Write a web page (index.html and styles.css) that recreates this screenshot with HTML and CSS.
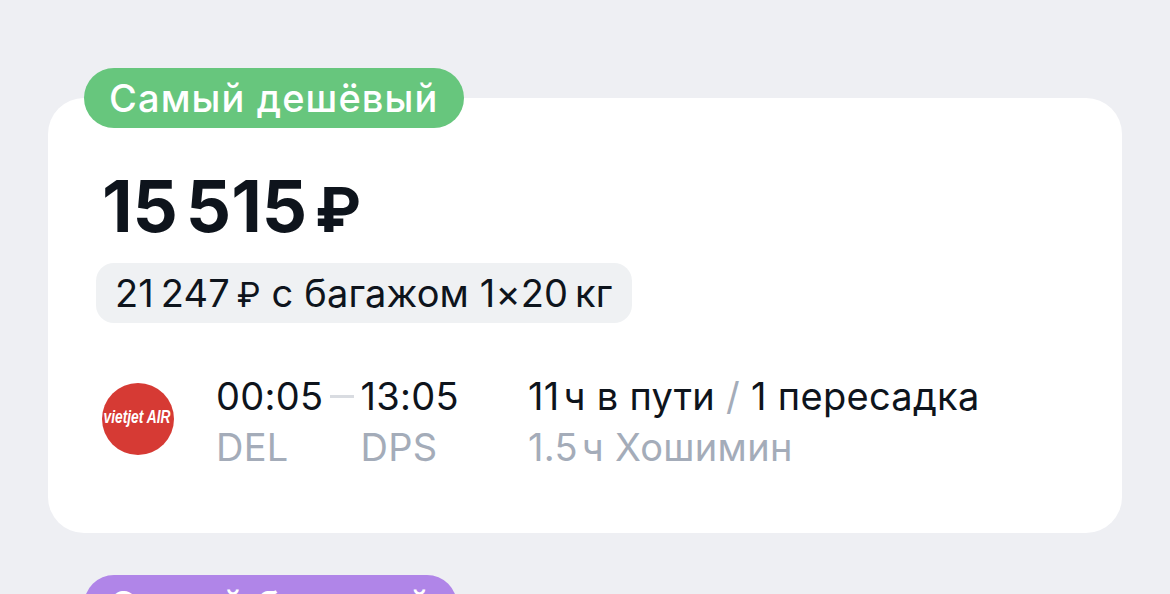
FILE: index.html
```html
<!DOCTYPE html>
<html lang="ru">
<head>
    <meta charset="UTF-8">
    <meta name="viewport" content="width=device-width, initial-scale=1.0">
    <title>Билеты</title>
    <link rel="stylesheet" href="styles.css">
</head>
<body>
    <div class="offers">
        <div class="offer">
            <div class="offer-badge badge-green">Самый дешёвый</div>
            <div class="price">15 515 <span class="rub">₽</span></div>
            <div class="baggage"><span class="tight">21 247 <span class="rub">₽</span></span> с багажом 1×<span class="tight">20 кг</span></div>
            <div class="flight">
                <svg class="airline-logo" viewBox="0 0 72 72">
                    <circle cx="36" cy="36" r="36" fill="#d63a34"/>
                    <text x="1.5" y="40" class="logo-text" textLength="67" lengthAdjust="spacingAndGlyphs">vietjet AIR</text>
                </svg>
                <div class="times">
                    <div class="time-col">
                        <div class="main-line">00:05</div>
                        <div class="sub-line">DEL</div>
                    </div>
                    <div class="time-dash"></div>
                    <div class="time-col">
                        <div class="main-line">13:05</div>
                        <div class="sub-line">DPS</div>
                    </div>
                </div>
                <div class="route">
                    <div class="main-line"><span class="tighter">11 ч</span> в пути <span class="slash">/</span> 1 пересадка</div>
                    <div class="sub-line"><span class="tighter">1.5 ч</span> Хошимин</div>
                </div>
            </div>
        </div>
        <div class="offer">
            <div class="offer-badge badge-purple">Самый быстрый</div>
        </div>
    </div>
</body>
</html>
```

FILE: styles.css
```css
* {
    margin: 0;
    padding: 0;
    box-sizing: border-box;
}

html, body {
    height: 100%;
    overflow: hidden;
}

body {
    font-family: 'Inter', 'Liberation Sans', sans-serif;
    background: #eeeff3;
    color: #0e141c;
}

.offers {
    padding: 98px 48px 0;
    display: flex;
    flex-direction: column;
    gap: 72px;
}

.offer {
    background: white;
    border-radius: 36px;
    padding: 0 36px 0 54px;
    height: 435px;
}

.offer-badge {
    width: fit-content;
    height: 60px;
    margin: -30px 0 0 -18px;
    padding: 0 25px;
    border-radius: 30px;
    color: white;
    font-size: 38px;
    font-weight: 500;
    letter-spacing: 1.1px;
    line-height: 60px;
    white-space: nowrap;
}

.badge-green {
    background: #67c67d;
}

.badge-purple {
    background: #b085e8;
}

.rub {
    line-height: 1;
}

.price {
    margin-top: 38px;
    font-size: 71px;
    font-weight: 700;
    line-height: 80px;
    word-spacing: -9px;
}

.price .rub {
    font-size: 62px;
}

.baggage {
    width: fit-content;
    height: 60px;
    margin: 17px 0 0 -6px;
    padding: 0 19px;
    background: #eff1f3;
    border-radius: 18px;
    font-size: 38px;
    letter-spacing: 0.15px;
    line-height: 60px;
    white-space: nowrap;
}

.baggage .rub {
    font-size: 34px;
}

.tight {
    word-spacing: -4px;
}

.tighter {
    word-spacing: -7px;
}

.flight {
    display: flex;
    align-items: flex-start;
    margin-top: 48px;
}

.airline-logo {
    width: 72px;
    height: 72px;
    margin-top: 12px;
    flex-shrink: 0;
}

.logo-text {
    fill: white;
    font-family: 'Liberation Sans', sans-serif;
    font-size: 18px;
    font-weight: 700;
    font-style: italic;
}

.times {
    display: flex;
    margin-left: 42px;
}

.time-dash {
    width: 24px;
    height: 3px;
    margin: 24px 6px 0 7px;
    background: #d9dce1;
}

.route {
    margin-left: 69px;
}

.main-line {
    font-size: 38px;
    letter-spacing: 0.3px;
    line-height: 51px;
    white-space: nowrap;
}

.sub-line {
    color: #a4acb9;
    font-size: 38px;
    letter-spacing: 0.3px;
    line-height: 51px;
    white-space: nowrap;
}

.slash {
    color: #a4acb9;
}
```
